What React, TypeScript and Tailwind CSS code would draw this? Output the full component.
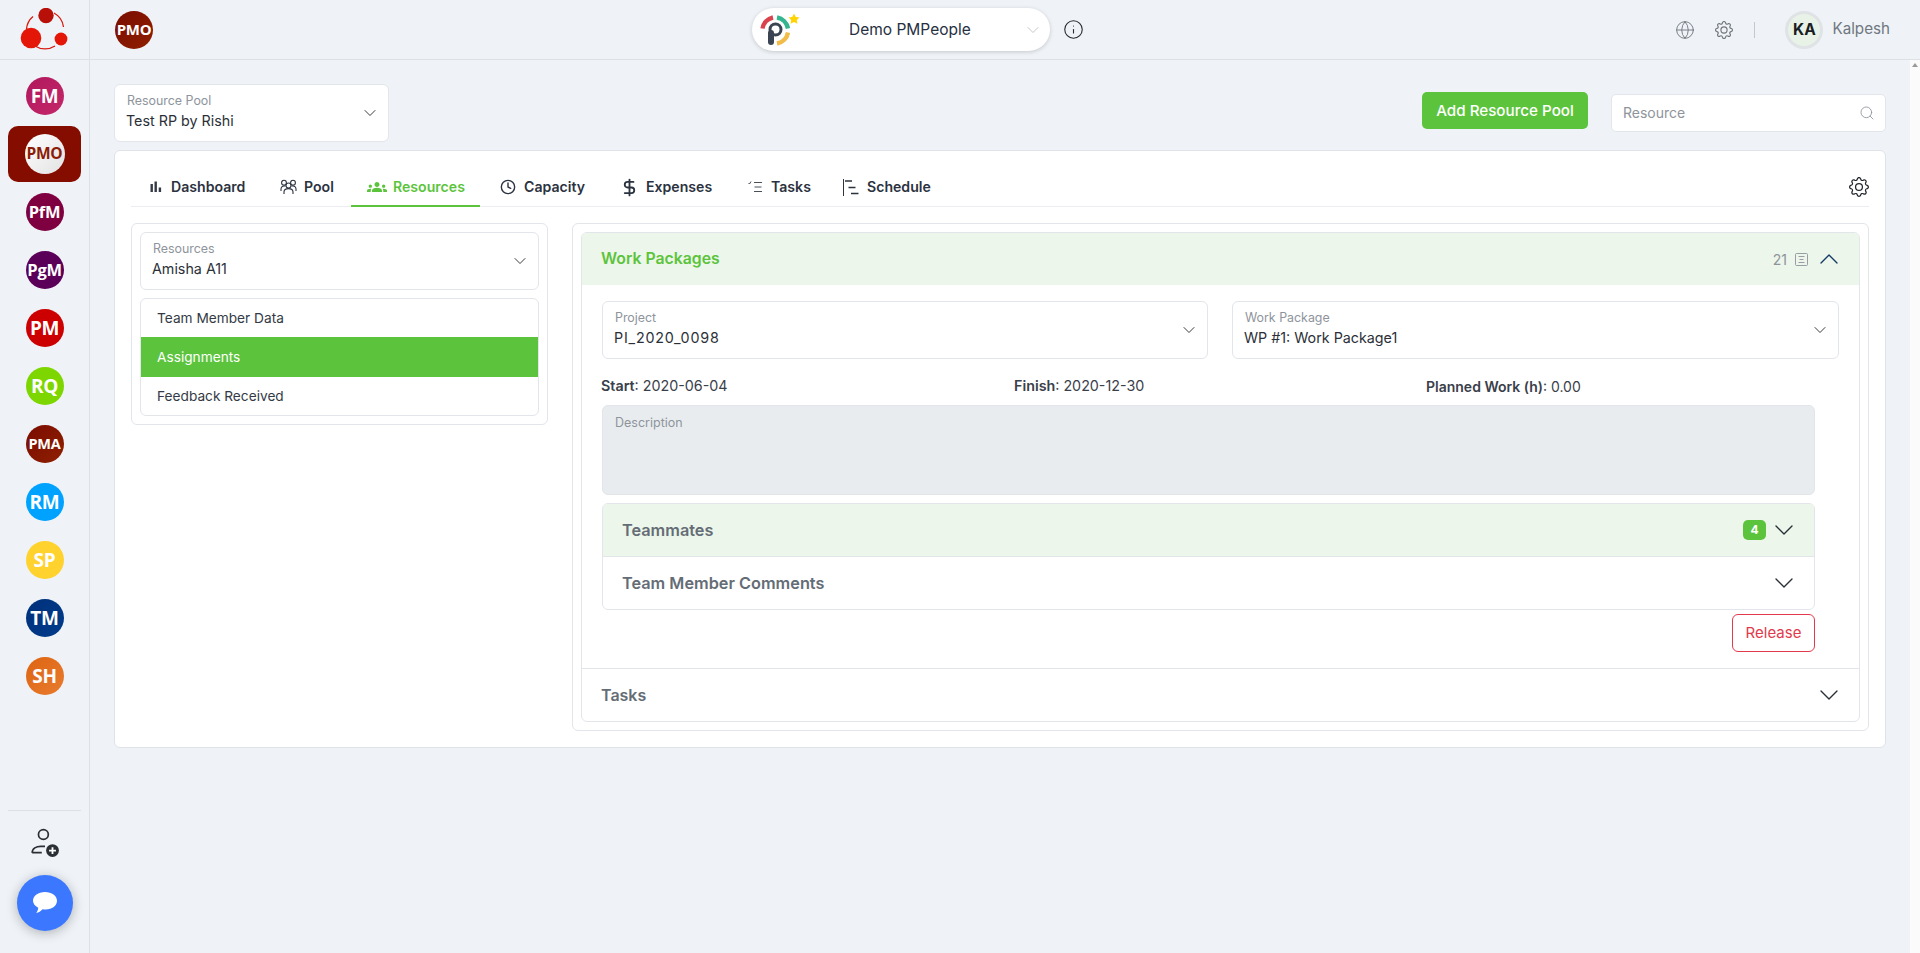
import React from "react";
import { ChevronDown, ChevronUp, Clock, DollarSign, Globe, Info, Search } from "lucide-react";
import { BsGear } from "react-icons/bs";
import { MdGroups } from "react-icons/md";

const apps = [
  { t: "FM", c: "bg-[linear-gradient(135deg,#b0175c,#c4286a)] text-white", s: "text-[19px]" },
  { t: "PMO", active: true, c: "", s: "" },
  { t: "PfM", c: "bg-[#7f0040] text-white", s: "text-[16.5px]" },
  { t: "PgM", c: "bg-[#5a0058] text-white", s: "text-[16.5px]" },
  { t: "PM", c: "bg-[#cc0000] text-white", s: "text-[19px]" },
  { t: "RQ", c: "bg-[#7ed600] text-white", s: "text-[19px]" },
  { t: "PMA", c: "bg-[linear-gradient(135deg,#7a0c00,#8f2000)] text-white", s: "text-[14.5px]" },
  { t: "RM", c: "bg-[#00a2ff] text-white", s: "text-[19px]" },
  { t: "SP", c: "bg-[#ffd22e] text-white", s: "text-[19px]" },
  { t: "TM", c: "bg-[linear-gradient(135deg,#00307a,#003c8c)] text-white", s: "text-[19px]" },
  { t: "SH", c: "bg-[linear-gradient(135deg,#dd6410,#e87c30)] text-white", s: "text-[19px]" },
];

const BarsIcon = () => (
  <svg width="12" height="12" viewBox="0 0 12 12" fill="#333a45"><rect x="0.5" y="3" width="2.4" height="8" /><rect x="4.5" y="0.5" width="2.4" height="10.5" /><rect x="8.7" y="6.5" width="2.4" height="4.5" /></svg>
);
const PoolIcon = () => (
  <svg width="17" height="16" viewBox="0 0 17 15" fill="none" stroke="#2b3240" strokeWidth="1.1">
    <circle cx="8.5" cy="6" r="2.5" />
    <circle cx="4" cy="3.2" r="2.4" />
    <circle cx="13" cy="3.2" r="2.4" />
    <path d="M4 14.5v-2c0-2 2-3.400 4.500-3.400s4.500 1.400 4.500 3.400v2" />
    <path d="M1 11.500V9.500c0-1.600 1.200-3 3-3h1.500M16 11.500V9.500c0-1.600-1.200-3-3-3h-1.500" />
  </svg>
);
const TasksIcon = () => (
  <svg width="14" height="12" viewBox="0 0 14 12" fill="none" stroke="#4a5058" strokeWidth="1"><path d="M0.5 2l1 1 1.500-2.500" /><path d="M6 1.500h8M6.500 6h7M6 10.500h8" /></svg>
);
const ScheduleIcon = () => (
  <svg width="16" height="17" viewBox="0 0 16 17" fill="none" stroke="#2b3240"><path d="M0.5 0v17" strokeWidth="1" /><path d="M2 2h7M5.500 8.500h7M8 14.500h7.500" strokeWidth="1.700" /></svg>
);

function Field({ label, value, className, valueClass = "" }: { label: string; value: string; className: string; valueClass?: string }) {
  return (
    <div className={`flex h-[58px] items-center justify-between rounded-[6px] border border-[#e2e5ea] bg-white pl-[11px] pr-[8px] ${className}`}>
      <div className="-mt-[2px] flex flex-col">
        <span className="pl-[1px] text-[12.4px] leading-[18px] text-[#8e949c]">{label}</span>
        <span className={`text-[14.3px] leading-[22px] text-[#2b3038] ${valueClass}`}>{value}</span>
      </div>
      <ChevronDown size={20} strokeWidth={1.15} className="text-[#333]" />
    </div>
  );
}

function Tab({ icon, label, active, className }: { icon: React.ReactNode; label: string; active?: boolean; className: string }) {
  return (
    <div className={`flex h-[46px] items-center border-b-2 pt-[9px] text-[14.1px] font-semibold ${active ? "border-[#5cc43c] text-[#5cc43c]" : "border-transparent text-[#2b3240]"} ${className}`}>
      {icon}
      <span>{label}</span>
    </div>
  );
}

export default function App() {
  return (
    <div className="flex h-[953px] w-[1920px] overflow-hidden bg-[#eff3f7] text-[#2b3038] [font-family:Inter,'Noto_Sans',sans-serif]">
      {/* Sidebar */}
      <aside className="flex h-full w-[90px] shrink-0 flex-col border-r border-[#dde1e6]">
        <div className="flex h-[60px] shrink-0 items-center justify-center border-b border-[#dde1e6]">
          <svg width="50" height="44" viewBox="0 0 50 44">
            <path d="M13 8.500A18.500 18.500 0 0 0 6.500 21M34 5a18.500 18.500 0 0 1 9.500 14M15 38a18.500 18.500 0 0 0 20 0" fill="none" stroke="#d8160c" strokeWidth="1.300" />
            <circle cx="26" cy="7.500" r="7.700" fill="#b80f08" />
            <circle cx="11" cy="30" r="10.300" fill="#e31607" />
            <circle cx="41" cy="31" r="6.400" fill="#e31607" />
          </svg>
        </div>
        <div className="flex flex-col items-center pt-[7px]">
          {apps.map((a) =>
            a.active ? (
              <div key={a.t} className="my-[1px] flex h-[56px] w-[73px] items-center justify-center rounded-[10px] bg-[#850d00]">
                <div className="flex h-[40px] w-[40px] items-center justify-center rounded-full bg-[linear-gradient(135deg,#ffffff,#e2e2e2)] font-['Open_Sans'] text-[15.5px] font-bold tracking-[-0.3px] text-[#8c1c06]">PMO</div>
              </div>
            ) : (
              <div key={a.t} className="flex h-[58px] w-[73px] items-center justify-center">
                <div className={`flex h-[38px] w-[38px] items-center justify-center rounded-full font-['Open_Sans'] font-bold tracking-[-0.3px] ${a.c} ${a.s}`}>{a.t}</div>
              </div>
            ),
          )}
        </div>
        <div className="mt-auto flex flex-col items-center pb-[22px]">
          <div className="h-px w-[73px] bg-[#dde1e6]" />
          <svg className="mt-[16px]" width="30" height="30" viewBox="0 0 28 28" fill="none" stroke="#2a2f36" strokeWidth="1.600">
            <circle cx="12.500" cy="7" r="4.600" />
            <path d="M2 24c0-4 4-6 8-6h4M2 24h9" />
            <circle cx="21" cy="22" r="6" fill="#2a2f36" stroke="none" />
            <path d="M21 18.800v6.400M17.800 22h6.400" stroke="#fff" strokeWidth="1.700" />
          </svg>
          <div className="mt-[18px] flex h-[56px] w-[56px] items-center justify-center rounded-full bg-[#3b78ff] shadow-[0_2px_12px_rgba(0,0,0,0.28)]">
            <svg width="26" height="24" viewBox="0 0 26 24" fill="#fff"><path d="M13 1c6.800 0 12 3.600 12 8.800 0 5-5 8.700-11.200 8.700-1.200 0-2.300-.1-3.300-.3-1.600 1.900-3.800 3.500-6.300 3.800 1-1.200 1.800-3 2-5.300C3 15.200 1 12.700 1 9.800 1 4.600 6.200 1 13 1z" /></svg>
          </div>
        </div>
      </aside>

      <div className="flex min-w-0 flex-1 flex-col">
        {/* Header */}
        <header className="flex h-[60px] shrink-0 items-center border-b border-[#dde1e6] pl-[25px] pr-[30px]">
          <div className="flex h-[38px] w-[38px] items-center justify-center rounded-full bg-[linear-gradient(135deg,#7a0c00,#8f2000)] font-['Open_Sans'] text-[15px] font-bold tracking-[-0.3px] text-white">PMO</div>
          <div className="ml-[599px] flex h-[43px] w-[298px] items-center rounded-full bg-white pl-[8px] pr-[7px] shadow-[0_1px_4px_rgba(0,0,0,0.18)]">
            <svg width="44" height="38" viewBox="0 0 44 38" fill="none">
              <path d="M2.500 17.500a13.500 13.500 0 0 1 10.500-11" stroke="#d9434e" strokeWidth="4.400" />
              <path d="M17 6.500a13.500 13.500 0 0 1 11 11" stroke="#35b58f" strokeWidth="4.400" />
              <path d="M28 21.500a13.500 13.500 0 0 1-11 11" stroke="#f2bc4b" strokeWidth="4.400" />
              <circle cx="15.500" cy="18.500" r="5.500" stroke="#3a4452" strokeWidth="3" />
              <path d="M11 22v9" stroke="#3a4452" strokeWidth="6" strokeLinecap="round" />
              <path d="M34 2.500l1.700 3.400 3.800.5-2.700 2.700.6 3.700-3.400-1.800-3.400 1.800.6-3.700-2.700-2.700 3.800-.5z" fill="#ffd400" />
            </svg>
            <span className="ml-[45px] text-[15.5px] text-[#26303f]">Demo PMPeople</span>
            <ChevronDown size={20} strokeWidth={1} className="ml-auto text-[#b8bcc2]" />
          </div>
          <Info size={21} strokeWidth={1.250} className="ml-[13px] text-[#25282c]" />
          <Globe size={20} strokeWidth={1.100} className="ml-auto text-[#70767d]" />
          <BsGear size={18} className="ml-[20px] text-[#70767d]" />
          <div className="ml-[21px] h-[16px] w-px bg-[#c4c8cd]" />
          <div className="ml-[30px] flex h-[38px] w-[38px] items-center justify-center rounded-full border-[3px] border-[#e0e3e6] bg-[#e8f2e7] text-[15.5px] font-bold text-[#1a1d21]">KA</div>
          <span className="ml-[9px] text-[15.200px] text-[#6f7780]">Kalpesh</span>
        </header>

        <div className="flex min-h-0 flex-1">
          <main className="min-w-0 flex-1 pl-[24px] pr-[24px] pt-[24px]">
            <div className="flex h-[66px] items-start">
              <Field label="Resource Pool" value="Test RP by Rishi" className="w-[275px]" />
              <div className="ml-auto mt-[8px] flex h-[37px] w-[166px] items-center justify-center rounded-[5px] bg-[#5cc43c] pt-[1px] text-[15.200px] font-medium text-white">Add Resource Pool</div>
              <div className="ml-[23px] mt-[10px] flex h-[38px] w-[275px] items-center justify-between rounded-[5px] border border-[#e2e5ea] bg-white pb-[1px] pl-[11px] pr-[10px] text-[14px] text-[#8e949c]">
                <span>Resource</span>
                <Search size={16} strokeWidth={1.300} className="text-[#8e949c]" />
              </div>
            </div>

            {/* Card */}
            <section className="h-[598px] rounded-[6px] border border-[#dfe2e7] bg-white pl-[16px] pr-[16px] pt-[10px]">
              <div className="flex h-[46px] items-center border-b border-[#ebedf0]">
                <Tab icon={<BarsIcon />} label="Dashboard" className="ml-[1px] w-[131px] gap-[9px] pl-[18px]" />
                <Tab icon={<PoolIcon />} label="Pool" className="w-[88px] gap-[7px] pl-[17px]" />
                <Tab active icon={<MdGroups size={20} />} label="Resources" className="w-[129px] gap-[6px] pl-[16px]" />
                <Tab icon={<Clock size={16} strokeWidth={2.100} />} label="Capacity" className="ml-[4px] w-[118px] gap-[8px] pl-[16px]" />
                <Tab icon={<DollarSign size={19} strokeWidth={2.300} />} label="Expenses" className="ml-[1px] w-[127px] gap-[7px] pl-[17px]" />
                <Tab icon={<TasksIcon />} label="Tasks" className="ml-[1px] w-[95px] gap-[9px] pl-[17px]" />
                <Tab icon={<ScheduleIcon />} label="Schedule" className="w-[110px] gap-[8px] pl-[17px]" />
                <BsGear size={20} className="ml-auto mt-[6px] text-[#22262c]" />
              </div>

              <div className="mt-[16px] flex items-start gap-[24px]">
                {/* Left panel */}
                <div className="flex w-[417px] flex-col gap-[8px] rounded-[6px] border border-[#e2e5ea] p-[8px]">
                  <Field label="Resources" value="Amisha A11" className="w-full" />
                  <div className="flex flex-col overflow-hidden rounded-[6px] border border-[#e2e5ea] text-[13.700px]">
                    <div className="flex h-[38px] items-center pl-[16px] text-[#333a45]">Team Member Data</div>
                    <div className="flex h-[40px] items-center bg-[#5cc43c] pl-[16px] text-white">Assignments</div>
                    <div className="flex h-[38px] items-center pl-[16px] text-[#333a45]">Feedback Received</div>
                  </div>
                </div>

                {/* Right panel */}
                <div className="h-[508px] flex-1 rounded-[6px] border border-[#e2e5ea] p-[8px]">
                  <div className="flex h-[490px] flex-col overflow-hidden rounded-[6px] border border-[#e2e5ea]">
                    <div className="flex h-[52px] shrink-0 items-center bg-[#edf6ea] pl-[19px] pr-[14px]">
                      <span className="text-[15.800px] font-semibold text-[#5cc43c]">Work Packages</span>
                      <span className="ml-auto text-[14px] text-[#8e949c]">21</span>
                      <svg className="ml-[8px]" width="13" height="13" viewBox="0 0 13 13" fill="none" stroke="#8e949c" strokeWidth="0.900"><rect x="0.500" y="0.500" width="12" height="12" rx="1" /><path d="M3.500 3.500h6M4.500 6.500h4M3.500 9.500h6" /></svg>
                      <ChevronUp size={32} strokeWidth={1} className="ml-[5px] text-[#153a66]" />
                    </div>
                    <div className="flex flex-1 flex-col pl-[20px] pr-[20px] pt-[16px]">
                      <div className="flex gap-[24px]">
                        <Field label="Project" value="PI_2020_0098" valueClass="tracking-[0.8px]" className="w-[606px]" />
                        <Field label="Work Package" value="WP #1: Work Package1" className="flex-1" />
                      </div>
                      <div className="-ml-[1px] mt-[17px] flex h-[20px] w-[1214px] items-center text-[14.300px] text-[#3a404a]">
                        <span className="w-[413px]"><b className="font-semibold">Start</b>: 2020-06-04</span>
                        <span className="w-[412px]"><b className="font-semibold">Finish</b>: 2020-12-30</span>
                        <span className="text-[14px]"><b className="font-semibold">Planned Work (h)</b>: 0.00</span>
                      </div>
                      <div className="mt-[9px] h-[90px] w-[1213px] rounded-[6px] border border-[#e2e5ea] bg-[#e9ecef] pl-[12px] pt-[8px] text-[12.500px] text-[#8e949c]">Description</div>
                      <div className="mt-[8px] w-[1213px] overflow-hidden rounded-[6px] border border-[#e2e5ea]">
                        <div className="flex h-[53px] items-center border-b border-[#e2e5ea] bg-[#edf6ea] pl-[19px] pr-[14px]">
                          <span className="text-[16.300px] font-semibold text-[#646d76]">Teammates</span>
                          <span className="ml-auto flex h-[20px] w-[23px] items-center justify-center rounded-[5px] bg-[#5cc43c] text-[12px] font-bold text-white">4</span>
                          <ChevronDown size={32} strokeWidth={1} className="ml-[2px] text-[#2a2f36]" />
                        </div>
                        <div className="flex h-[52px] items-center pl-[19px] pr-[14px]">
                          <span className="text-[16.300px] font-semibold text-[#646d76]">Team Member Comments</span>
                          <ChevronDown size={32} strokeWidth={1} className="ml-auto text-[#2a2f36]" />
                        </div>
                      </div>
                      <div className="mt-[4px] flex w-[1213px] justify-end">
                        <div className="flex h-[38px] w-[83px] items-center justify-center rounded-[6px] border border-[#e23a4c] text-[15px] text-[#e23a4c]">Release</div>
                      </div>
                    </div>
                    <div className="flex h-[53px] shrink-0 items-center border-t border-[#e2e5ea] pl-[19px] pr-[14px]">
                      <span className="text-[16px] font-semibold text-[#646d76]">Tasks</span>
                      <ChevronDown size={32} strokeWidth={1} className="ml-auto text-[#2a2f36]" />
                    </div>
                  </div>
                </div>
              </div>
            </section>
          </main>
          {/* Scrollbar */}
          <div className="flex w-[10px] shrink-0 justify-center bg-[#fbfbfb] pt-[3px]">
            <div className="h-0 w-0 border-x-[3.5px] border-b-[4px] border-x-transparent border-b-[#9a9a9a]" />
          </div>
        </div>
      </div>
    </div>
  );
}
